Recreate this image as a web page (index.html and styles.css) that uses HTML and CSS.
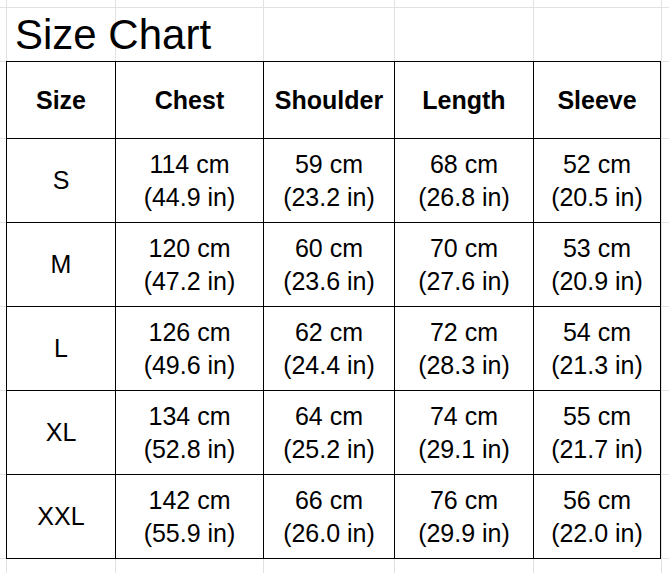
FILE: index.html
```html
<!DOCTYPE html>
<html>
<head>
<meta charset="utf-8">
<link rel="stylesheet" href="styles.css">
</head>
<body>
<div class="sheet">
  <div class="title">Size Chart</div>
  <table class="chart">
    <colgroup>
      <col class="c1"><col class="c2"><col class="c3"><col class="c4"><col class="c5">
    </colgroup>
    <thead>
      <tr><th>Size</th><th>Chest</th><th>Shoulder</th><th>Length</th><th>Sleeve</th></tr>
    </thead>
    <tbody>
      <tr><td>S</td><td>114 cm<br>(44.9 in)</td><td>59 cm<br>(23.2 in)</td><td>68 cm<br>(26.8 in)</td><td>52 cm<br>(20.5 in)</td></tr>
      <tr><td>M</td><td>120 cm<br>(47.2 in)</td><td>60 cm<br>(23.6 in)</td><td>70 cm<br>(27.6 in)</td><td>53 cm<br>(20.9 in)</td></tr>
      <tr><td>L</td><td>126 cm<br>(49.6 in)</td><td>62 cm<br>(24.4 in)</td><td>72 cm<br>(28.3 in)</td><td>54 cm<br>(21.3 in)</td></tr>
      <tr><td>XL</td><td>134 cm<br>(52.8 in)</td><td>64 cm<br>(25.2 in)</td><td>74 cm<br>(29.1 in)</td><td>55 cm<br>(21.7 in)</td></tr>
      <tr><td>XXL</td><td>142 cm<br>(55.9 in)</td><td>66 cm<br>(26.0 in)</td><td>76 cm<br>(29.9 in)</td><td>56 cm<br>(22.0 in)</td></tr>
    </tbody>
  </table>
</div>
</body>
</html>
```

FILE: styles.css
```css
html, body {
  margin: 0;
  padding: 0;
}
body {
  width: 669px;
  height: 573px;
  overflow: hidden;
  font-family: "Liberation Sans", Arial, sans-serif;
  color: #000;
  background-color: #fff;
  background-image:
    linear-gradient(#e2e2e2, #e2e2e2),
    linear-gradient(#e2e2e2, #e2e2e2),
    linear-gradient(#e2e2e2, #e2e2e2),
    linear-gradient(#e2e2e2, #e2e2e2),
    linear-gradient(#e2e2e2, #e2e2e2),
    linear-gradient(#e2e2e2, #e2e2e2),
    linear-gradient(#e2e2e2, #e2e2e2),
    linear-gradient(#e2e2e2, #e2e2e2),
    linear-gradient(#e2e2e2, #e2e2e2),
    linear-gradient(#e2e2e2, #e2e2e2),
    linear-gradient(#e2e2e2, #e2e2e2),
    linear-gradient(#e2e2e2, #e2e2e2),
    linear-gradient(#e2e2e2, #e2e2e2),
    linear-gradient(#e2e2e2, #e2e2e2);
  background-repeat: no-repeat;
  background-size:
    1px 100%, 1px 100%, 1px 100%, 1px 100%, 1px 100%, 1px 100%,
    100% 1px, 100% 1px, 100% 1px, 100% 1px, 100% 1px, 100% 1px, 100% 1px, 100% 1px;
  background-position:
    6px 0, 115px 0, 263px 0, 394px 0, 533px 0, 661px 0,
    0 7px, 0 61px, 0 138px, 0 222px, 0 306px, 0 390px, 0 474px, 0 558px;
}
.sheet {
  padding: 7px 0 0 6px;
}
.title {
  height: 47px;
  padding: 7px 0 0 9px;
  font-size: 42px;
  line-height: 42px;
}
.chart {
  border-collapse: collapse;
  table-layout: fixed;
  width: 655px;
  background: #fff;
}
.c1 { width: 109px; }
.c2 { width: 148px; }
.c3 { width: 131px; }
.c4 { width: 139px; }
.c5 { width: 127px; }
.chart th, .chart td {
  border: 1px solid #000;
  text-align: center;
  vertical-align: middle;
  padding: 0;
  font-size: 25px;
}
.chart th {
  height: 76px;
  font-weight: bold;
  line-height: 28px;
}
.chart td {
  height: 83px;
  line-height: 33px;
  font-weight: normal;
}
```
